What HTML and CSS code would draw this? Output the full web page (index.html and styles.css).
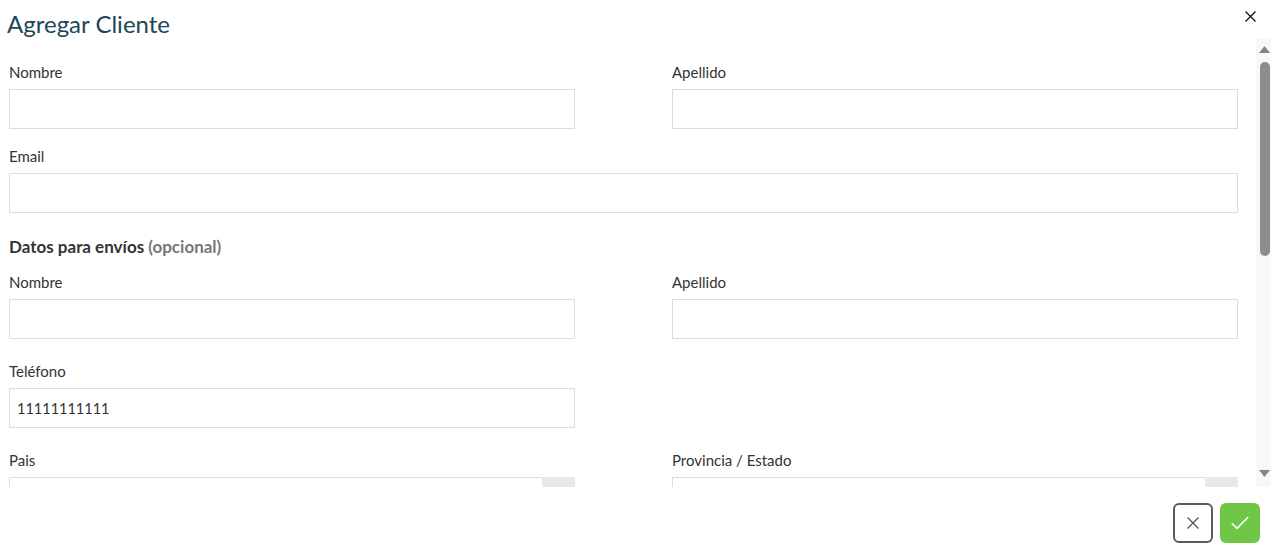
FILE: index.html
```html
<!DOCTYPE html>
<html lang="es">
<head>
<meta charset="utf-8">
<title>Agregar Cliente</title>
<link rel="stylesheet" href="styles.css">
</head>
<body>
<div class="modal">
  <div class="modal-header">
    <h1 class="modal-title">Agregar Cliente</h1>
    <button class="close-btn" aria-label="Cerrar">
      <svg width="11" height="11" viewBox="0 0 11 11"><path d="M0.5 0.5 L10.5 10.5 M10.5 0.5 L0.5 10.5" stroke="#111" stroke-width="1.3" fill="none"/></svg>
    </button>
  </div>
  <div class="modal-body">
    <div class="scroll-content">
      <div class="grid sec1">
        <div class="field"><label>Nombre</label><input class="input" type="text"></div>
        <div class="field"><label>Apellido</label><input class="input" type="text"></div>
        <div class="field full last1"><label>Email</label><input class="input" type="text"></div>
      </div>
      <h2 class="section-title">Datos para envíos <span class="muted">(opcional)</span></h2>
      <div class="grid sec2">
        <div class="field"><label>Nombre</label><input class="input" type="text"></div>
        <div class="field"><label>Apellido</label><input class="input" type="text"></div>
        <div class="field"><label>Teléfono</label><input class="input" type="text" value="11111111111"></div>
        <div class="field"></div>
        <div class="field"><label>Pais</label><div class="select"><span class="select-value"></span><span class="select-addon"></span></div></div>
        <div class="field"><label>Provincia / Estado</label><div class="select"><span class="select-value"></span><span class="select-addon"></span></div></div>
      </div>
    </div>
    <div class="scrollbar" aria-hidden="true">
      <div class="sb-arrow sb-up">
        <svg width="11" height="7" viewBox="0 0 11 7"><path d="M5.5 0 L11 7 L0 7 Z" fill="#858585"/></svg>
      </div>
      <div class="sb-thumb"></div>
      <div class="sb-space"></div>
      <div class="sb-arrow sb-down">
        <svg width="11" height="7" viewBox="0 0 11 7"><path d="M0 0 L11 0 L5.5 7 Z" fill="#858585"/></svg>
      </div>
    </div>
  </div>
  <div class="modal-footer">
    <button class="btn btn-cancel" aria-label="Cancelar">
      <svg width="12" height="12" viewBox="0 0 12 12"><path d="M0.5 0.5 L11.5 11.5 M11.5 0.5 L0.5 11.5" stroke="#555" stroke-width="1.3" fill="none"/></svg>
    </button>
    <button class="btn btn-ok" aria-label="Aceptar">
      <svg width="18" height="14" viewBox="0 0 18 14"><path d="M0.8 7.2 L6 12.4 L17.2 1" stroke="#fff" stroke-width="1.5" fill="none"/></svg>
    </button>
  </div>
</div>
</body>
</html>
```
FILE: styles.css
```css
html, body {
  margin: 0;
  padding: 0;
  background: #fff;
}
body {
  font-family: Lato, "Open Sans", "Liberation Sans", sans-serif;
  color: #333;
  font-size: 15px;
}
.modal {
  width: 1271px;
  height: 552px;
  display: flex;
  flex-direction: column;
}
.modal-header {
  height: 39px;
  flex: none;
  display: flex;
  justify-content: space-between;
  align-items: flex-start;
  padding: 0 15px 0 7px;
  box-sizing: border-box;
}
.modal-title {
  margin: 0;
  padding-top: 9px;
  font-size: 24px;
  font-weight: 400;
  line-height: normal;
  color: #1d4658;
  white-space: nowrap;
}
.close-btn {
  margin-top: 11px;
  padding: 0;
  border: 0;
  background: none;
  width: 11px;
  height: 11px;
  display: flex;
}
.modal-body {
  height: 448px;
  flex: none;
  display: flex;
}
.scroll-content {
  flex: 1;
  overflow: hidden;
  padding: 24px 18px 0 9px;
}
.scrollbar {
  width: 15px;
  flex: none;
  background: #f8f8f8;
  display: flex;
  flex-direction: column;
  align-items: center;
}
.sb-arrow {
  height: 19px;
  width: 15px;
  display: flex;
  justify-content: center;
  align-items: center;
  flex: none;
}
.sb-up { padding: 2px 0 0 1px; box-sizing: border-box; }
.sb-thumb {
  width: 10px;
  height: 194px;
  margin: 4px 0 0 2px;
  border-radius: 5px;
  background: #8d8d8d;
  flex: none;
}
.sb-space { flex: 1; }
.sb-down { height: 24px; padding: 0 0 4px 1px; box-sizing: border-box; }
.grid {
  display: grid;
  grid-template-columns: 1fr 1fr;
  column-gap: 97px;
}
.full { grid-column: 1 / -1; }
.field label {
  display: block;
  line-height: 18px;
  height: 18px;
  margin-bottom: 8px;
  font-size: 15px;
  color: #333;
  white-space: nowrap;
}
.sec1 .field { margin-bottom: 18px; }
.sec1 .field.last1 { margin-bottom: 24px; }
.sec2 .field { margin-bottom: 23px; }
.input {
  display: block;
  width: 100%;
  height: 40px;
  box-sizing: border-box;
  border: 1px solid #dcdcdc;
  border-radius: 0;
  padding: 0 7px;
  font-family: inherit;
  font-size: 14.5px;
  color: #333;
  outline: none;
}
.section-title {
  margin: 0 0 16px;
  font-size: 17px;
  font-weight: 700;
  line-height: 20px;
  color: #333;
  white-space: nowrap;
}
.muted { color: #777; }
.select {
  display: flex;
  height: 40px;
  box-sizing: border-box;
  border: 1px solid #dcdcdc;
}
.select-value { flex: 1; }
.select-addon {
  width: 33px;
  margin: -1px -1px -1px 0;
  background: #e7eaeb;
}
.modal-footer {
  flex: 1;
  display: flex;
  justify-content: flex-end;
  align-items: flex-start;
  gap: 7px;
  padding: 16px 11px 0 0;
}
.btn {
  width: 40px;
  height: 40px;
  box-sizing: border-box;
  border-radius: 6px;
  display: flex;
  align-items: center;
  justify-content: center;
  padding: 0;
  cursor: pointer;
}
.btn-cancel {
  background: #fff;
  border: 2px solid #5c5c5c;
}
.btn-ok {
  background: #6fc544;
  border: 0;
}
```
